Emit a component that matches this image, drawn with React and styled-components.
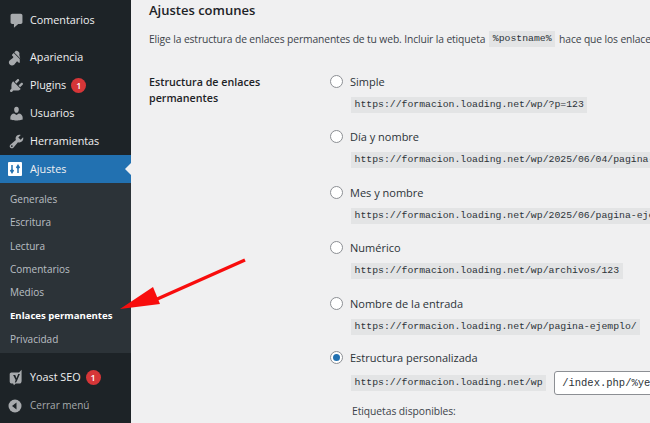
import React from "react";
import styled, { createGlobalStyle } from "styled-components";

const Global = createGlobalStyle`
  html, body { margin: 0; padding: 0; width: 650px; height: 423px; overflow: hidden; background: #f0f0f1; }
  * { box-sizing: border-box; }
  body { font-family: "Open Sans", "Noto Sans", sans-serif; }
`;
const Page = styled.div`
  position: relative; width: 650px; height: 423px; display: flex; overflow: hidden;
  background: #f0f0f1; color: #2c3338;
`;
const Sidebar = styled.nav`
  width: 131px; height: 423px; flex: none; background: #1d2327;
  display: flex; flex-direction: column;
`;
const MenuItem = styled.div`
  height: ${p => p.$h || 28}px; margin-top: ${p => p.$mt || 0}px; flex: none;
  display: flex; align-items: center; padding-left: 8px; position: relative;
  font-size: ${p => (p.$muted ? 10 : 10.8)}px; color: ${p => (p.$muted ? "#a7aaad" : "#f0f0f1")};
  background: ${p => (p.$active ? "#2271b1" : "transparent")};
`;
const ItemLabel = styled.span`
  position: relative; top: -1px;
`;
const IconSlot = styled.span`
  width: 22px; flex: none; display: flex; align-items: center; color: ${p => (p.$active ? "#fff" : "#a7aaad")};
`;
const Badge = styled.span`
  width: 15px; height: 15px; border-radius: 50%; background: #d63638; color: #fff; margin-left: 5px;
  display: inline-flex; align-items: center; justify-content: center; font-size: 9px; font-weight: 600;
`;
const Notch = styled.span`
  position: absolute; right: 0; top: 8px; width: 0; height: 0;
  border: 6px solid transparent; border-right-color: #f0f0f1; border-left: 0;
`;
const Sub = styled.div`
  height: 170px; flex: none; background: #2c3338; padding: 4.500px 0 0 10px;
  display: flex; flex-direction: column;
`;
const SubLink = styled.div`
  height: 23.3px; flex: none; display: flex; align-items: center;
  font-size: ${p => (p.$current ? 9.6 : 10)}px;
  color: ${p => (p.$current ? "#fff" : "rgba(240,246,252,.72)")}; font-weight: ${p => (p.$current ? 700 : 400)};
`;
const Main = styled.main`
  flex: 1; min-width: 0; padding: 0 0 0 18px; overflow: hidden; white-space: nowrap;
`;
const Title = styled.h2`
  margin: 0; height: 20px; line-height: 20px; font-size: 13px; font-weight: 600; color: #1d2327;
`;
const Intro = styled.p`
  margin: 9px 0 0; height: 20px; display: flex; align-items: center; font-size: 10.3px; letter-spacing: -0.12px; color: #3c434a;
`;
const Code = styled.code`
  display: inline-block; height: 16px; line-height: 16px; padding: 0 3.5px; background: #e3e4e5; color: #2c3338;
  font-family: "Liberation Mono", monospace; font-size: 9.8px; letter-spacing: 0; flex: none;
`;
const InlineCode = styled(Code)` margin: 0 4px; `;
const FormRow = styled.div`
  margin-top: 24.500px; display: flex; align-items: flex-start;
`;
const Label = styled.div`
  width: 180px; flex: none; font-size: 10.7px; line-height: 16px; font-weight: 600; color: #1d2327;
`;
const Options = styled.div`
  margin-left: 1px; display: flex; flex-direction: column;
`;
const Option = styled.div`
  height: 55.4px; flex: none; display: flex; flex-direction: column;
`;
const RadioLine = styled.div`
  height: 16px; display: flex; align-items: center; gap: 7px; font-size: 11px; font-weight: 500; color: #2c3338;
`;
const Radio = styled.span`
  width: 13px; height: 13px; border-radius: 50%; border: 1px solid #8c8f94; background: #fff; flex: none;
  display: flex; align-items: center; justify-content: center;
  &::after { content: ""; width: 7px; height: 7px; border-radius: 50%; background: ${p => (p.$on ? "#2271b1" : "transparent")}; }
`;
const CodeLine = styled.div`
  margin: ${p => (p.$custom ? 6 : 7.5)}px 0 0 21px; display: flex; align-items: center; gap: 8px;
`;
const Custom = styled.input`
  width: 140px; height: 24px; border: 1px solid #8c8f94; border-radius: 3px; background: #fff; padding: 0 7px;
  font-family: "Liberation Mono", monospace; font-size: 10.5px; color: #2c3338; flex: none; outline: none;
`;
const Tags = styled.div` margin: 9px 0 0 22px; font-size: 10.3px; letter-spacing: -0.05px; color: #3c434a; `;
const Arrow = styled.svg` position: absolute; left: 118px; top: 255px; `;

const I = ({ d, s = 17 }) => (
  <svg width={s} height={s} viewBox="0 0 20 20" fill="currentColor"><path d={d} /></svg>
);
const icons = {
  comments: "M5 2h10c1.100 0 2 .9 2 2v8c0 1.100-.9 2-2 2h-3l-5 4.500V14H5c-1.100 0-2-.9-2-2V4c0-1.100.9-2 2-2z",
  brush: "M14.480 11.060L7.410 3.990l1.500-1.500c.5-.56 2.300-.47 3.540.770 1.240 1.230 1.320 3.030.770 3.540zm-.7.710L6.700 4.700 4.930 6.470c-.39.390-.39 1.020 0 1.410l1.060 1.060c.39.390.39 1.030 0 1.420-.6.600-1.430 1.110-2.210 1.690-.35.260-.7.530-1.010.840C1.430 13.710 1 14.710 1 15.710c0 .96.350 1.920 1.080 2.650.72.730 1.680 1.090 2.640 1.090 1.010 0 2-.43 2.830-1.260.31-.31.580-.66.840-1.010.58-.78 1.090-1.610 1.690-2.210.39-.39 1.030-.39 1.420 0l1.060 1.060c.39.390 1.020.39 1.410 0z",
  plug: "M13.110 4.360L9.870 7.600 8 5.730l3.240-3.240c.35-.34 1.050-.2 1.560.32.520.51.660 1.210.31 1.550zm-8 1.770l.91-1.120 9.010 9.010-1.190.840c-.71.710-2.630 1.160-3.820 1.160H6.140L4.900 17.260c-.59.590-1.540.59-2.120 0-.59-.58-.59-1.530 0-2.120l1.240-1.240v-3.880c0-1.130.4-3.050 1.090-3.890zm7.260 3.970l3.240-3.240c.34-.35 1.040-.21 1.550.31.520.51.660 1.210.31 1.550l-3.240 3.250z",
  user: "M10 9.250c-2.270 0-2.730-3.440-2.730-3.440C7 4.020 7.820 2 9.970 2c2.160 0 2.980 2.020 2.710 3.810 0 0-.41 3.440-2.680 3.440zm0 2.570L12.720 10c2.390 0 4.520 2.330 4.520 4.530v2.490s-3.650 1.130-7.240 1.130c-3.650 0-7.240-1.130-7.240-1.130v-2.490c0-2.250 1.940-4.500 4.440-4.500z",
  tool: "M16.680 9.770c-1.340 1.340-3.300 1.670-4.950.99l-5.410 6.520c-.99.990-2.590.99-3.580 0s-.99-2.590 0-3.570l6.520-5.420c-.68-1.650-.35-3.610.99-4.950 1.280-1.280 3.120-1.620 4.720-1.060l-2.890 2.890 2.820 2.820 2.860-2.870c.53 1.580.18 3.400-1.080 4.670zM3.810 16.210c.4.390 1.040.39 1.430 0 .4-.4.4-1.040 0-1.440-.39-.39-1.030-.39-1.430 0-.39.400-.39 1.040 0 1.440z",
  yoast: "M4 4h9l3-3v13c0 2-1 3-3 3H9l-2 2-1-2H4c-1 0-2-1-2-2V6c0-1 1-2 2-2zm2 3l3 6-1 3c2 0 2-1 3-3l3-7h-2l-2 5-1.500-4z",
};

const items = [["Simple", "https://formacion.loading.net/wp/?p=123"], ["Día y nombre", "https://formacion.loading.net/wp/2025/06/04/pagina-ejemplo/"], ["Mes y nombre", "https://formacion.loading.net/wp/2025/06/pagina-ejemplo/"], ["Numérico", "https://formacion.loading.net/wp/archivos/123"], ["Nombre de la entrada", "https://formacion.loading.net/wp/pagina-ejemplo/"]];

export default function App() {
  return (
    <Page>
      <Global />
      <Sidebar>
        <MenuItem $h={28} $mt={6}><IconSlot><I d={icons.comments} /></IconSlot><ItemLabel>Comentarios</ItemLabel></MenuItem>
        <MenuItem $mt={9}><IconSlot><I d={icons.brush} /></IconSlot><ItemLabel>Apariencia</ItemLabel></MenuItem>
        <MenuItem><IconSlot><I d={icons.plug} /></IconSlot><ItemLabel>Plugins</ItemLabel><Badge>1</Badge></MenuItem>
        <MenuItem><IconSlot><I d={icons.user} /></IconSlot><ItemLabel>Usuarios</ItemLabel></MenuItem>
        <MenuItem><IconSlot><I d={icons.tool} /></IconSlot><ItemLabel>Herramientas</ItemLabel></MenuItem>
        <MenuItem $active>
          <IconSlot $active>
            <svg width="14" height="14" viewBox="0 0 14 14"><rect width="14" height="14" rx="1" fill="#fff" /><path d="M4 3v7M2.500 8L4 10.500 5.500 8M10 11V4M8.500 6L10 3.500 11.500 6" stroke="#2271b1" strokeWidth="1.500" fill="none" /></svg>
          </IconSlot>
          <ItemLabel>Ajustes</ItemLabel><Notch />
        </MenuItem>
        <Sub>
          <SubLink>Generales</SubLink><SubLink>Escritura</SubLink><SubLink>Lectura</SubLink><SubLink>Comentarios</SubLink>
          <SubLink>Medios</SubLink><SubLink $current>Enlaces permanentes</SubLink><SubLink>Privacidad</SubLink>
        </Sub>
        <MenuItem $mt={10}><IconSlot><I d={icons.yoast} /></IconSlot><ItemLabel>Yoast SEO</ItemLabel><Badge>1</Badge></MenuItem>
        <MenuItem $h={30} $muted>
          <IconSlot>
            <svg width="14" height="14" viewBox="0 0 14 14"><circle cx="7" cy="7" r="6.500" fill="#a7aaad" /><path d="M8.500 3.500v7L4 7z" fill="#1d2327" /></svg>
          </IconSlot>
          <ItemLabel>Cerrar menú</ItemLabel>
        </MenuItem>
      </Sidebar>
      <Main>
        <Title>Ajustes comunes</Title>
        <Intro>Elige la estructura de enlaces permanentes de tu web. Incluir la etiqueta <InlineCode>%postname%</InlineCode> hace que los enlaces sean más fáciles de entender.</Intro>
        <FormRow>
          <Label>Estructura de enlaces<br />permanentes</Label>
          <Options>
            {items.map(([t, u]) => (
              <Option key={t}><RadioLine><Radio />{t}</RadioLine><CodeLine><Code>{u}</Code></CodeLine></Option>
            ))}
            <Option>
              <RadioLine><Radio $on />Estructura personalizada</RadioLine>
              <CodeLine $custom><Code>https://formacion.loading.net/wp</Code><Custom readOnly value="/index.php/%year%/%monthnum%/" /></CodeLine>
              <Tags>Etiquetas disponibles:</Tags>
            </Option>
          </Options>
        </FormRow>
      </Main>
      <Arrow width="130" height="60" viewBox="0 0 130 60">
        <path d="M127 5L37 45" stroke="#f80d0d" strokeWidth="3.500" fill="none" />
        <path d="M2 54L35 32 42 49z" fill="#f80d0d" />
      </Arrow>
    </Page>
  );
}
